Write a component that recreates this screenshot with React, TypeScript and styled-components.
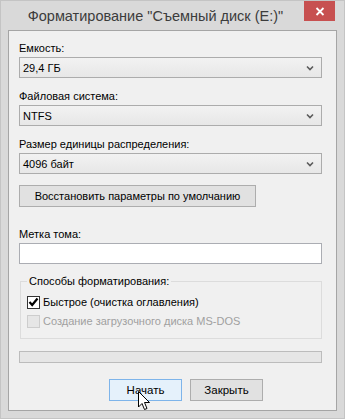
import styled, { createGlobalStyle } from 'styled-components';

const GlobalStyle = createGlobalStyle`
	html, body {
		margin: 0;
		padding: 0;
		background: #ffffff;
	}
	body {
		font-family: "Liberation Sans", Arial, sans-serif;
		font-size: 11px;
		color: #000000;
	}
`;

const Window = styled.div`
	width: 345px;
	height: 419px;
	box-sizing: border-box;
	background: #d9d9d9;
	border: 1px solid #c4c4c4;
	display: flex;
	flex-direction: column;
`;

const TitleBar = styled.div`
	height: 29px;
	display: flex;
	align-items: flex-start;
`;

const Title = styled.div`
	flex: 1;
	padding: 1px 0 0 6px;
	line-height: 29px;
	text-align: center;
	font-size: 14.5px;
	color: #3c3c3c;
	white-space: nowrap;
`;

const CloseButton = styled.div`
	width: 31px;
	height: 20px;
	margin-right: 9px;
	background: #c75050;
	display: flex;
	align-items: center;
	justify-content: center;
`;

const Client = styled.div`
	flex: 1;
	margin: 0 7px 7px 7px;
	background: #f0f0f0;
	border: 1px solid #a5a5a5;
	padding: 9px 14px 0 10px;
	display: flex;
	flex-direction: column;
`;

const Label = styled.div<{ $top?: number }>`
	margin-top: ${(p) => p.$top ?? 0}px;
	line-height: 16px;
	height: 16px;
	margin-bottom: 1px;
	white-space: nowrap;
`;

const Combo = styled.div`
	height: 21px;
	box-sizing: border-box;
	border: 1px solid #acacac;
	background: linear-gradient(#f2f2f2, #e7e7e7);
	display: flex;
	align-items: center;
	justify-content: space-between;
	padding: 0 7px 0 3px;
`;

const Button = styled.div<{ $hover?: boolean; $width: number; $small?: boolean }>`
	width: ${(p) => p.$width}px;
	height: 22px;
	box-sizing: border-box;
	border: 1px solid ${(p) => (p.$hover ? '#7eb4ea' : '#adadad')};
	background: ${(p) => (p.$hover ? '#e5f1fb' : '#e1e1e1')};
	display: flex;
	align-items: center;
	justify-content: center;
	white-space: nowrap;
	font-size: ${(p) => (p.$small ? '11px' : '11.5px')};
`;

const Section = styled.div<{ $top: number }>`
	margin-top: ${(p) => p.$top}px;
	display: flex;
	flex-direction: column;
`;

const TextInput = styled.div`
	height: 21px;
	box-sizing: border-box;
	border: 1px solid #abadb3;
	background: #ffffff;
`;

const GroupBox = styled.fieldset`
	margin: 9px 0 0 1px;
	padding: 5px 8px 0 6px;
	border: 1px solid #dcdcdc;
	border-radius: 0;
	height: 66px;
	box-sizing: border-box;
	display: flex;
	flex-direction: column;
	gap: 3px;
`;

const Legend = styled.legend`
	padding: 0 2px;
	margin-left: 0;
	line-height: 16px;
`;

const CheckRow = styled.div<{ $disabled?: boolean }>`
	display: flex;
	align-items: center;
	gap: 3px;
	height: 16px;
	color: ${(p) => (p.$disabled ? '#a0a0a0' : '#000000')};
	white-space: nowrap;
`;

const Box = styled.div<{ $disabled?: boolean }>`
	width: 13px;
	height: 13px;
	box-sizing: border-box;
	border: 1px solid ${(p) => (p.$disabled ? '#cdcdcd' : '#333333')};
	background: ${(p) => (p.$disabled ? '#e6e6e6' : '#ffffff')};
	display: flex;
	align-items: center;
	justify-content: center;
`;

const Progress = styled.div`
	margin-top: 12px;
	height: 12px;
	box-sizing: border-box;
	border: 1px solid #bcbcbc;
	background: #e6e6e6;
`;

const ButtonRow = styled.div`
	margin-top: 16px;
	display: flex;
	gap: 8px;
	padding-left: 90px;
	position: relative;
`;

// mouse pointer hovering over "Начать"
const Cursor = styled.svg`
	position: absolute;
	left: 119px;
	top: 12px;
`;

const Chevron = () => (
	<svg width="8" height="6" viewBox="0 0 8 6">
		<path d="M1 1.5 L4 4.5 L7 1.5" fill="none" stroke="#5a5a5a" strokeWidth="1.6" />
	</svg>
);

const ComboBox = ({ value }: { value: string }) => (
	<Combo>
		<span>{value}</span>
		<Chevron />
	</Combo>
);

export default function App() {
	return (
		<>
			<GlobalStyle />
			<Window>
				<TitleBar>
					<Title>Форматирование "Съемный диск (E:)"</Title>
					<CloseButton>
						<svg width="10" height="9" viewBox="0 0 10 9">
							<path d="M1.5 1 L8.5 8 M8.5 1 L1.5 8" stroke="#ffffff" strokeWidth="1.8" />
						</svg>
					</CloseButton>
				</TitleBar>
				<Client>
					<Label>Емкость:</Label>
					<ComboBox value="29,4 ГБ" />
					<Label $top={10}>Файловая система:</Label>
					<ComboBox value="NTFS" />
					<Label $top={10}>Размер единицы распределения:</Label>
					<ComboBox value="4096 байт" />
					<Section $top={11}>
						<Button $width={237} $small>Восстановить параметры по умолчанию</Button>
					</Section>
					<Label $top={19}>Метка тома:</Label>
					<TextInput />
					<GroupBox>
						<Legend>Способы форматирования:</Legend>
						<CheckRow>
							<Box>
								<svg width="11" height="10" viewBox="0 0 11 10">
									<path d="M1.5 5 L4.2 8 L9.5 1.5" fill="none" stroke="#000000" strokeWidth="2.2" />
								</svg>
							</Box>
							Быстрое (очистка оглавления)
						</CheckRow>
						<CheckRow $disabled>
							<Box $disabled />
							Создание загрузочного диска MS-DOS
						</CheckRow>
					</GroupBox>
					<Progress />
					<ButtonRow>
						<Button $width={73} $hover>Начать</Button>
						<Button $width={73}>Закрыть</Button>
						<Cursor width="13" height="20" viewBox="0 0 13 20">
							<path
								d="M0.5 0.5 L0.5 16 L4 12.5 L6.5 18.5 L9 17.5 L6.5 11.5 L11.5 11.5 Z"
								fill="#ffffff"
								stroke="#000000"
								strokeWidth="1"
							/>
						</Cursor>
					</ButtonRow>
				</Client>
			</Window>
		</>
	);
}
